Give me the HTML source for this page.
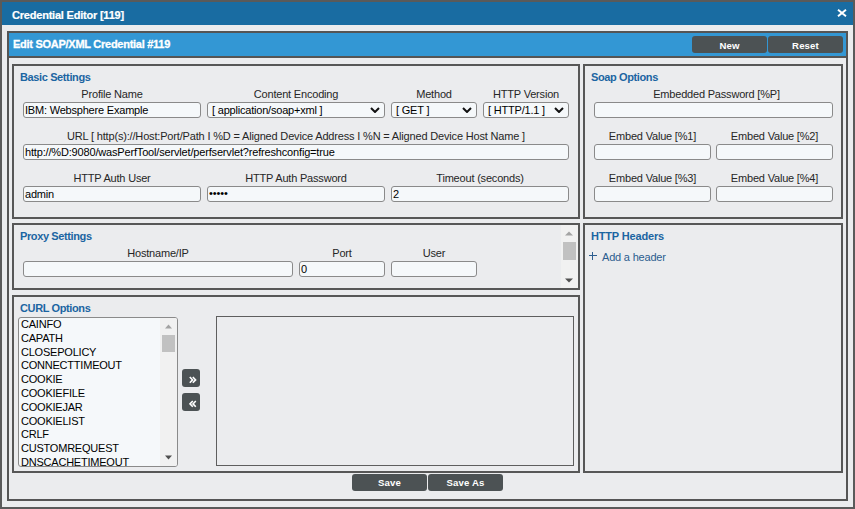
<!DOCTYPE html>
<html><head><meta charset="utf-8">
<style>
*{box-sizing:border-box;margin:0;padding:0}
html,body{width:855px;height:509px;overflow:hidden;background:#ebecee}
body{position:relative;font-family:"Liberation Sans",sans-serif;font-size:11px;color:#333}
.a{position:absolute}
#frame{left:0;top:0;width:855px;height:509px;border:2px solid #5a5a5a}
#title{left:2px;top:2px;width:851px;height:23px;background:#196ca2}
.t{position:absolute;white-space:nowrap;line-height:13px;height:13px;letter-spacing:-0.19px}
.tb{font-weight:bold}
.wh{color:#fff}
#panel{left:7px;top:31px;width:841px;height:470px;border:2px solid #555}
#hdr{left:9px;top:33px;width:837px;height:23px;background:#3397d4;border-bottom:2px solid #555;height:25px}
.box{position:absolute;border:2px solid #575757}
.gt{position:absolute;white-space:nowrap;line-height:13px;height:13px;font-weight:bold;color:#1b65a2;font-size:11px;letter-spacing:-0.38px}
.lbl{position:absolute;white-space:nowrap;line-height:13px;height:13px;text-align:center;color:#262626;letter-spacing:-0.19px}
.inp{position:absolute;height:16px;border:1px solid #8a8a8a;border-radius:3px;background:#f5f8fa}
.iv{position:absolute;white-space:nowrap;line-height:13px;height:13px;color:#000;letter-spacing:-0.2px}
.btn{position:absolute;background:#4c5254;border-radius:3px;color:#fff;font-weight:bold;font-size:9.6px;letter-spacing:0.15px;text-align:center;line-height:17px;height:17px}
.chev{position:absolute;width:10px;height:6px}
</style></head><body>
<div id="frame" class="a"></div>
<div id="title" class="a"></div>
<div class="t tb wh" style="left:12px;top:9px;letter-spacing:-0.21px;-webkit-text-stroke:0.2px #fff">Credential Editor [119]</div>
<svg class="a" style="left:837px;top:9px" width="10" height="8" viewBox="0 0 10 8"><path d="M1 0.7L9 7.3M9 0.7L1 7.3" stroke="#fff" stroke-width="1.9" stroke-linecap="butt"/></svg>

<div id="panel" class="a"></div>
<div id="hdr" class="a"></div>
<div class="t tb wh" style="left:13px;top:38px;letter-spacing:-0.27px;-webkit-text-stroke:0.3px #fff">Edit SOAP/XML Credential #119</div>
<div class="btn" style="left:692px;top:36px;width:75px;padding-top:1px">New</div>
<div class="btn" style="left:768px;top:36px;width:75px;padding-top:1px">Reset</div>

<!-- Basic Settings -->
<div class="box" style="left:12px;top:64px;width:568px;height:155px"></div>
<div class="gt" style="left:20px;top:71px">Basic Settings</div>
<div class="lbl" style="left:23px;top:88px;width:178px">Profile Name</div>
<div class="lbl" style="left:207px;top:88px;width:178px">Content Encoding</div>
<div class="lbl" style="left:391px;top:88px;width:86px">Method</div>
<div class="lbl" style="left:483px;top:88px;width:86px">HTTP Version</div>
<div class="inp" style="left:23px;top:102px;width:178px"></div>
<div class="iv" style="left:25px;top:104px">IBM: Websphere Example</div>
<div class="inp" style="left:207px;top:102px;width:178px"></div>
<div class="iv" style="left:212px;top:104px">[ application/soap+xml ]</div>
<svg class="chev" style="left:370px;top:107px" viewBox="0 0 10 6"><path d="M1 1L5 5L9 1" fill="none" stroke="#111" stroke-width="2"/></svg>
<div class="inp" style="left:391px;top:102px;width:86px"></div>
<div class="iv" style="left:396px;top:104px">[ GET ]</div>
<svg class="chev" style="left:462px;top:107px" viewBox="0 0 10 6"><path d="M1 1L5 5L9 1" fill="none" stroke="#111" stroke-width="2"/></svg>
<div class="inp" style="left:483px;top:102px;width:86px"></div>
<div class="iv" style="left:488px;top:104px">[ HTTP/1.1 ]</div>
<svg class="chev" style="left:554px;top:107px" viewBox="0 0 10 6"><path d="M1 1L5 5L9 1" fill="none" stroke="#111" stroke-width="2"/></svg>

<div class="lbl" style="left:23px;top:130px;width:546px;letter-spacing:-0.17px">URL [ http(s)://Host:Port/Path I %D = Aligned Device Address I %N = Aligned Device Host Name ]</div>
<div class="inp" style="left:23px;top:144px;width:546px"></div>
<div class="iv" style="left:25px;top:146px;letter-spacing:-0.17px">http://%D:9080/wasPerfTool/servlet/perfservlet?refreshconfig=true</div>

<div class="lbl" style="left:23px;top:172px;width:178px">HTTP Auth User</div>
<div class="lbl" style="left:207px;top:172px;width:178px">HTTP Auth Password</div>
<div class="lbl" style="left:391px;top:172px;width:178px">Timeout (seconds)</div>
<div class="inp" style="left:23px;top:186px;width:178px"></div>
<div class="iv" style="left:25px;top:188px">admin</div>
<div class="inp" style="left:207px;top:186px;width:178px"></div>
<div class="iv" style="left:209px;top:187px;letter-spacing:-0.1px">&#8226;&#8226;&#8226;&#8226;&#8226;</div>
<div class="inp" style="left:391px;top:186px;width:178px"></div>
<div class="iv" style="left:393px;top:188px">2</div>

<!-- Soap Options -->
<div class="box" style="left:583px;top:64px;width:260px;height:155px"></div>
<div class="gt" style="left:591px;top:71px">Soap Options</div>
<div class="lbl" style="left:597px;top:88px;width:239px">Embedded Password [%P]</div>
<div class="inp" style="left:594px;top:102px;width:239px"></div>
<div class="lbl" style="left:594px;top:130px;width:117px">Embed Value [%1]</div>
<div class="lbl" style="left:716px;top:130px;width:117px">Embed Value [%2]</div>
<div class="inp" style="left:594px;top:144px;width:117px"></div>
<div class="inp" style="left:716px;top:144px;width:117px"></div>
<div class="lbl" style="left:594px;top:172px;width:117px">Embed Value [%3]</div>
<div class="lbl" style="left:716px;top:172px;width:117px">Embed Value [%4]</div>
<div class="inp" style="left:594px;top:186px;width:117px"></div>
<div class="inp" style="left:716px;top:186px;width:117px"></div>

<!-- Proxy Settings -->
<div class="box" style="left:12px;top:223px;width:568px;height:67px"></div>
<div class="gt" style="left:20px;top:230px">Proxy Settings</div>
<div class="lbl" style="left:23px;top:247px;width:270px">Hostname/IP</div>
<div class="lbl" style="left:299px;top:247px;width:86px">Port</div>
<div class="lbl" style="left:391px;top:247px;width:86px">User</div>
<div class="inp" style="left:23px;top:261px;width:270px"></div>
<div class="inp" style="left:299px;top:261px;width:86px"></div>
<div class="iv" style="left:301px;top:263px">0</div>
<div class="inp" style="left:391px;top:261px;width:86px"></div>
<div class="a" style="left:561px;top:225px;width:17px;height:63px;background:#f1f1f1"></div>
<svg class="a" style="left:565px;top:231px" width="8" height="5" viewBox="0 0 8 5"><path d="M0 4.5L4 0.5L8 4.5Z" fill="#a3a3a3"/></svg>
<div class="a" style="left:563px;top:242px;width:13px;height:18px;background:#c1c1c1"></div>
<svg class="a" style="left:565px;top:278px" width="8" height="5" viewBox="0 0 8 5"><path d="M0 0.5L4 4.5L8 0.5Z" fill="#505050"/></svg>

<!-- HTTP Headers -->
<div class="box" style="left:583px;top:223px;width:260px;height:250px"></div>
<div class="gt" style="left:591px;top:230px;letter-spacing:-0.17px">HTTP Headers</div>
<div class="a" style="left:592px;top:252px;width:1px;height:8px;background:#2c5d8f"></div><div class="a" style="left:589px;top:255px;width:8px;height:1px;background:#2c5d8f"></div>
<div class="t" style="left:602px;top:251px;color:#2c5d8f">Add a header</div>

<!-- CURL Options -->
<div class="box" style="left:12px;top:295px;width:568px;height:178px"></div>
<div class="gt" style="left:20px;top:302px">CURL Options</div>
<div class="a" style="left:18px;top:317px;width:160px;height:150px;border:1px solid #8a8a8a;border-radius:3px;background:#f5f8fa;overflow:hidden">
  <div class="a" style="left:2px;top:0px;line-height:13.8px;color:#000;letter-spacing:-0.22px;white-space:nowrap">CAINFO<br>CAPATH<br>CLOSEPOLICY<br>CONNECTTIMEOUT<br>COOKIE<br>COOKIEFILE<br>COOKIEJAR<br>COOKIELIST<br>CRLF<br>CUSTOMREQUEST<br>DNSCACHETIMEOUT</div>
  <div class="a" style="left:141px;top:0;width:17px;height:148px;background:#f1f1f1"></div>
</div>
<svg class="a" style="left:165px;top:324px" width="7" height="5" viewBox="0 0 7 5"><path d="M0 4.5L3.5 0.5L7 4.5Z" fill="#a3a3a3"/></svg>
<div class="a" style="left:162px;top:335px;width:13px;height:17px;background:#c1c1c1"></div>
<svg class="a" style="left:165px;top:455px" width="7" height="5" viewBox="0 0 7 5"><path d="M0 0.5L3.5 4.5L7 0.5Z" fill="#505050"/></svg>
<div class="btn" style="left:182px;top:369px;width:18px;height:18px"></div><svg class="a" style="left:189px;top:376px" width="8" height="8" viewBox="0 0 8 8"><path d="M0.8 1L3.6 3.9L0.8 6.8M3.8 1L6.6 3.9L3.8 6.8" fill="none" stroke="#fff" stroke-width="1.6"/></svg>
<div class="btn" style="left:182px;top:393px;width:18px;height:18px"></div><svg class="a" style="left:189px;top:400px" width="8" height="8" viewBox="0 0 8 8"><path d="M3.8 1L1 3.9L3.8 6.8M6.8 1L4 3.9L6.8 6.8" fill="none" stroke="#fff" stroke-width="1.6"/></svg>
<div class="a" style="left:216px;top:316px;width:358px;height:150px;border:1px solid #5e5e5e"></div>

<div class="btn" style="left:352px;top:474px;width:75px">Save</div>
<div class="btn" style="left:428px;top:474px;width:75px">Save As</div>
</body></html>
